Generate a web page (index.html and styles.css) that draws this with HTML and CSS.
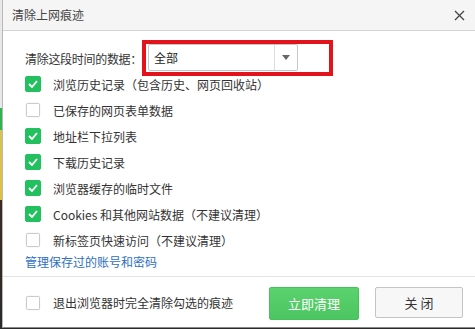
FILE: index.html
```html
<!DOCTYPE html>
<html lang="zh-CN">
<head>
<meta charset="utf-8">
<title>清除上网痕迹</title>
<link rel="stylesheet" href="styles.css">
</head>
<body>
<div class="dialog">
  <div class="titlebar">
    <span class="title">清除上网痕迹</span>
    <svg class="close" width="11" height="11" viewBox="0 0 11 11"><path d="M1 1L10 10M10 1L1 10" stroke="#444" stroke-width="1.3" fill="none"/></svg>
  </div>
  <div class="content">
    <div class="range-row">
      <span class="label">清除这段时间的数据：</span>
      <div class="highlight">
        <div class="select">
          <span class="select-value">全部</span>
          <span class="select-arrow"><svg width="8" height="5" viewBox="0 0 8 5"><path d="M0 0H8L4 5Z" fill="#666"/></svg></span>
        </div>
      </div>
    </div>
    <ul class="options">
      <li class="option"><span class="cb on"><svg width="10" height="8" viewBox="0 0 10 8"><path d="M1 4L4 7L9 1" stroke="#fff" stroke-width="1.8" fill="none"/></svg></span>浏览历史记录（包含历史、网页回收站）</li>
      <li class="option"><span class="cb"></span>已保存的网页表单数据</li>
      <li class="option"><span class="cb on"><svg width="10" height="8" viewBox="0 0 10 8"><path d="M1 4L4 7L9 1" stroke="#fff" stroke-width="1.8" fill="none"/></svg></span>地址栏下拉列表</li>
      <li class="option"><span class="cb on"><svg width="10" height="8" viewBox="0 0 10 8"><path d="M1 4L4 7L9 1" stroke="#fff" stroke-width="1.8" fill="none"/></svg></span>下载历史记录</li>
      <li class="option"><span class="cb on"><svg width="10" height="8" viewBox="0 0 10 8"><path d="M1 4L4 7L9 1" stroke="#fff" stroke-width="1.8" fill="none"/></svg></span>浏览器缓存的临时文件</li>
      <li class="option"><span class="cb on"><svg width="10" height="8" viewBox="0 0 10 8"><path d="M1 4L4 7L9 1" stroke="#fff" stroke-width="1.8" fill="none"/></svg></span>Cookies 和其他网站数据（不建议清理）</li>
      <li class="option"><span class="cb"></span>新标签页快速访问（不建议清理）</li>
    </ul>
    <a class="link" href="#">管理保存过的账号和密码</a>
  </div>
  <div class="footer">
    <label class="exit-opt"><span class="cb"></span>退出浏览器时完全清除勾选的痕迹</label>
    <div class="buttons">
      <button class="btn btn-primary">立即清理</button>
      <button class="btn btn-default">关 闭</button>
    </div>
  </div>
</div>
</body>
</html>
```
FILE: styles.css
```css
* { box-sizing: border-box; }
html, body { margin: 0; padding: 0; }
body {
  width: 475px;
  height: 329px;
  overflow: hidden;
  font-family: "Noto Sans CJK SC", "Noto Sans", sans-serif;
  font-size: 12px;
  color: #333;
  background: linear-gradient(to bottom, #e8e8e8 0, #e8e8e8 108px, #2fb34f 108px, #2fb34f 130px, #d8c255 130px, #e0c040 200px, #3b2a22 200px, #2a2a2a 329px);
}
.dialog {
  margin-left: 2px;
  width: 473px;
  height: 328px;
  background: #fff;
  border-left: 1px solid #b8b8b8;
  border-bottom: 1px solid #888;
  display: flex;
  flex-direction: column;
}
.titlebar {
  height: 31px;
  flex: none;
  background: #f5f5f5;
  border-bottom: 1px solid #d4d4d4;
  display: flex;
  align-items: center;
  justify-content: space-between;
  padding: 0 10px 0 9px;
}
.title { font-size: 12px; color: #444; line-height: 1; }
.close { display: block; }
.content {
  flex: 1;
  padding-left: 22px;
  display: flex;
  flex-direction: column;
}
.range-row {
  display: flex;
  align-items: center;
  margin-top: 9px;
  height: 36px;
}
.label {
  flex: none;
  width: 117px;
  white-space: nowrap;
  letter-spacing: -0.3px;
}
.highlight {
  flex: none;
  border: 4px solid #e3131c;
  height: 36px;
  padding: 0 31px 1px 2px;
}
.select {
  width: 150px;
  height: 27px;
  border: 1px solid #c6c6c6;
  border-radius: 2px;
  display: flex;
  align-items: center;
  background: #fff;
}
.select-value { flex: 1; padding-left: 5px; font-size: 12px; color: #222; }
.select-arrow {
  width: 23px;
  height: 100%;
  border-left: 1px solid #dcdcdc;
  display: flex;
  align-items: center;
  justify-content: center;
}
.select-arrow svg { display: block; }
.options {
  list-style: none;
  margin: 0;
  padding: 0;
}
.option {
  height: 26px;
  display: flex;
  align-items: center;
}
.options .option:first-child { margin-top: -5px; }
.cb {
  width: 16px;
  height: 16px;
  flex: none;
  margin-right: 12px;
  border: 1px solid #bdbdbd;
  border-radius: 2px;
  background: #fff;
  display: flex;
  align-items: center;
  justify-content: center;
  transform: scale(0.88);
}
.cb.on {
  background: #22c05e;
  border-color: #22c05e;
  transform: none;
}
.cb svg { display: block; }
.link {
  color: #2e6fc1;
  text-decoration: none;
  height: 18px;
  line-height: 18px;
  margin-top: 0;
}
.footer {
  height: 51px;
  flex: none;
  border-top: 1px solid #e3e3e3;
  display: flex;
  align-items: flex-start;
  justify-content: space-between;
  padding: 10px 12px 0 22px;
}
.exit-opt {
  display: flex;
  align-items: center;
  height: 31px;
}
.buttons { display: flex; gap: 16px; }
.btn {
  font-family: "Noto Sans CJK SC", "Noto Sans", sans-serif;
  font-size: 13px;
  border-radius: 2px;
  padding: 0;
  cursor: pointer;
}
.btn-primary {
  width: 90px;
  height: 33px;
  color: #fff;
  border: 1px solid #46c25d;
  background: linear-gradient(to bottom, #5ad26d, #4cc662);
}
.btn-default {
  width: 88px;
  height: 31px;
  color: #333;
  border: 1px solid #c4c4c4;
  background: #f7f7f7;
}
```
